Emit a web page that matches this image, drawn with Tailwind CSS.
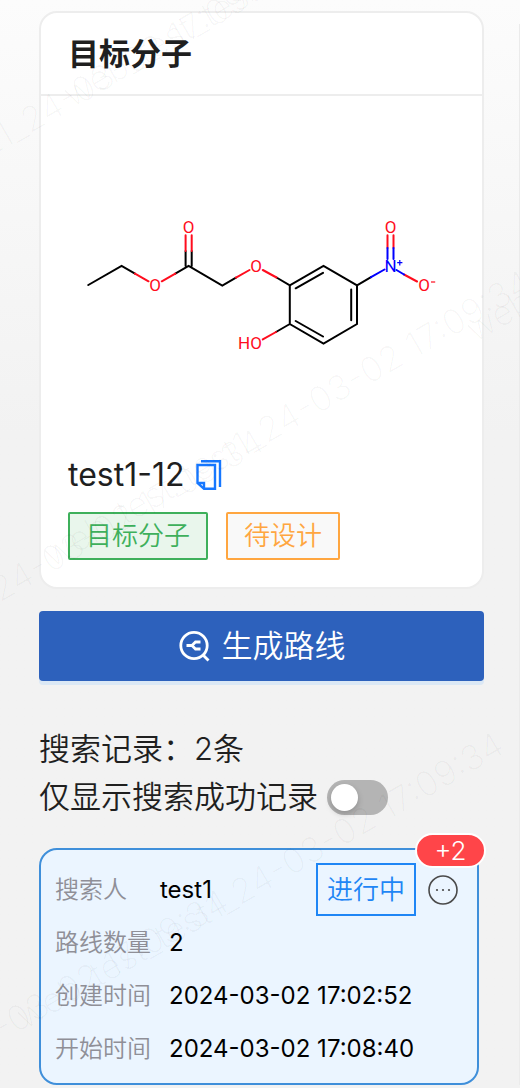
<!DOCTYPE html>
<html lang="zh-CN">
<head>
<meta charset="utf-8">
<meta name="viewport" content="width=device-width, initial-scale=1">
<title>目标分子</title>
<script src="https://cdn.jsdelivr.net/npm/@tailwindcss/browser@4"></script>
</head>
<body class="relative min-h-screen overflow-x-hidden bg-[#f2f2f2] bg-linear-to-b from-[#fcfcfc] from-0% to-[#f2f2f2] to-40% font-[Inter,'Noto_Sans_CJK_SC',sans-serif] font-[350] text-[#1f1f1f]">
<div class="flex">
  <main class="min-w-0 flex-1 pt-[11px] pr-[35px] pl-[39px]">
    <section class="rounded-[18px] border-2 border-[#ededed] bg-white">
      <header class="border-b-2 border-[#ededed] px-[27px]">
        <h1 class="text-[31px] leading-[81px] font-bold">目标分子</h1>
      </header>
      <div class="px-[27px] pb-[27px]">
        <svg class="-mx-[27px] h-[356px] w-[calc(100%+54px)]" viewBox="41 96 441 356" role="img" aria-label="分子结构">
          <g fill="none" stroke="#000" stroke-width="2" stroke-linecap="round">
            <path d="M88.3 285 121.6 266 135 273.6M175.3 273.6 188.6 266 222.3 285.5 236 277.6M185.6 266V251M191.7 266V251M276.5 277.5 289.8 285.3 323.5 266 357 285.3V324L323.5 343.5 289.8 324V285.3M295.7 288.3 323 272.8M351.2 289.5V320.2M323 336.5 295.7 321M289.8 324 276 332M357 285.3 371 277.2"/>
            <path stroke="#ff0d1e" d="M135 273.6 148.5 281.3M161.8 281.3 175.3 273.6M236 277.6 249.5 270M262.8 270 276.5 277.5M276 332 262.8 339.4M185.6 251V235.2M191.7 251V235.2M387.5 248V235.2M393.5 248V235.2M404 274.5 417 281.5"/>
            <path stroke="#00f" d="M371 277.2 384.5 269.5M387.5 259V248M393.5 259V248M396.5 270 404 274.5"/>
          </g>
          <g fill="#ff0d1e" font-family="Roboto, sans-serif" font-weight="400" font-size="17" text-anchor="middle">
            <text x="188.6" y="233">O</text>
            <text x="155" y="291">O</text>
            <text x="256" y="272">O</text>
            <text x="250" y="349">HO</text>
            <text x="390.6" y="233">O</text>
            <text x="424" y="291">O</text>
            <text x="390.6" y="272" fill="#00f">N</text>
          </g>
          <path stroke="#00f" stroke-width="1.2" d="M397.2 262.7H402.4M399.8 260V265.4"/>
          <path stroke="#ff0d1e" stroke-width="1.2" d="M431 282H435.2"/>
        </svg>
        <div class="flex h-[46px] items-center gap-3">
          <span class="text-[32px] font-normal">test1-12</span>
          <button type="button" aria-label="复制">
            <svg class="h-[30px] w-[26px]" viewBox="0 0 26 30" fill="none" stroke="#1677ff" stroke-width="2.4"><path d="M5 1.2H24V27M1.5 5H19V28.8H8L1.5 23ZM1.5 23H8V29"/></svg>
          </button>
        </div>
        <div class="mt-[14px] flex gap-[18px] text-[26px] leading-[44px]">
          <span class="rounded-[2px] border-2 border-[#3eb05b] bg-[#e9f6ec] px-4 text-[#3eb05b]">目标分子</span>
          <span class="rounded-[2px] border-2 border-[#ffa640] bg-[#f9f9f9] px-4 text-[#ffa640]">待设计</span>
        </div>
      </div>
    </section>

    <button type="button" class="mt-[22px] flex h-[70px] w-full items-center justify-center gap-3 rounded-[4px] bg-[#2d61bc] text-[31px] text-white shadow-[0_4px_0_#dbe8f5]">
      <svg class="size-8" viewBox="0 0 32 32" fill="none" stroke="#fff" stroke-width="2.8"><circle cx="16" cy="15.5" r="13.2"/><path d="M25 25 30.5 30.5"/><path stroke-width="2.8" d="M8.5 15.5H14M22.5 12H17.5L14 15.5 17.5 19H22.5"/></svg>
      <span>生成路线</span>
    </button>

    <div class="mt-[44px] text-[31px] leading-[48px]">
      <p>搜索记录：2条</p>
      <div class="flex items-center gap-[9px]">
        <label for="success-only">仅显示搜索成功记录</label>
        <input id="success-only" type="checkbox" role="switch" class="h-[35px] w-[61px] appearance-none rounded-full bg-[#b4b4b4] p-1 before:block before:size-[27px] before:rounded-full before:bg-white before:shadow-[0_3px_6px_rgba(0,0,0,0.2)] checked:bg-[#1677ff] checked:before:ml-auto">
      </div>
    </div>

    <article class="relative mt-[27px] mr-[5px] rounded-[18px] border-2 border-[#3f8fda] bg-[#ebf5ff] pt-[13px] pr-[19px] pb-2 pl-[14px] text-[24px] leading-[53px] text-black">
      <span class="absolute -top-[17px] -right-[9px] h-[35px] w-[71px] rounded-full border-2 border-white bg-[#ff4549] text-center text-[26px] leading-[31px] text-white">+2</span>
      <div class="flex items-center">
        <span class="w-[105px] text-[#8f8f97]">搜索人</span>
        <span class="font-normal">test1</span>
        <button type="button" class="ml-auto flex h-[53px] items-center border-2 border-[#1f86f5] px-[9px] text-[26px] leading-[48px] text-[#1f86f5]">进行中</button>
        <button type="button" aria-label="更多" class="ml-3">
          <svg class="size-[30px]" viewBox="0 0 30 30"><circle cx="15" cy="15" r="14" fill="none" stroke="#4a4a4a" stroke-width="1.6"/><g fill="#4a4a4a"><circle cx="9" cy="15" r="1.1"/><circle cx="15" cy="15" r="1.1"/><circle cx="21" cy="15" r="1.1"/></g></svg>
        </button>
      </div>
      <div class="flex gap-[18px]"><span class="text-[#8f8f97]">路线数量</span><span class="font-normal">2</span></div>
      <div class="flex gap-[18px]"><span class="text-[#8f8f97]">创建时间</span><span class="font-normal">2024-03-02 17:02:52</span></div>
      <div class="flex gap-[18px]"><span class="text-[#8f8f97]">开始时间</span><span class="font-normal">2024-03-02 17:08:40</span></div>
    </article>
  </main>
  <div class="mt-6 w-px bg-[#ebebeb]"></div>
</div>

<!-- watermark over the whole page -->
<svg class="pointer-events-none absolute top-0 left-0 h-full w-full" viewBox="0 0 520 1088" preserveAspectRatio="xMinYMin slice" aria-hidden="true">
  <g fill="#000" fill-opacity="0.026" font-family="Inter, sans-serif" font-size="35" font-weight="300">
    <text transform="translate(-185 258) rotate(-30)">web_test_test1_24-03-02 17:09:34</text>
    <text transform="translate(72 108) rotate(-30)">web_test_test1_24-03-02 17:09:34</text>
    <text transform="translate(-215 727) rotate(-30)">web_test_test1_24-03-02 17:09:34</text>
    <text transform="translate(52 568) rotate(-30)">web_test_test1_24-03-02 17:09:34</text>
    <text transform="translate(475 343) rotate(-30)">web_test_test1</text>
    <text transform="translate(-250 1187) rotate(-30)">web_test_test1_24-03-02 17:09:34</text>
    <text transform="translate(25 1030) rotate(-30)">web_test_test1_24-03-02 17:09:34</text>
  </g>
</svg>
</body>
</html>
